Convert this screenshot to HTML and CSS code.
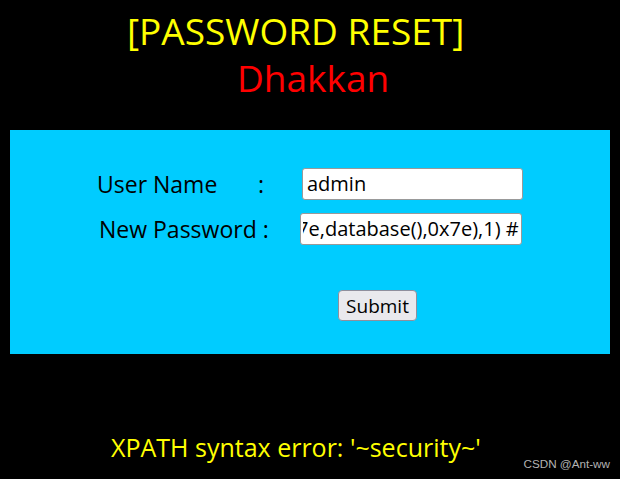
FILE: index.html
```html
<!DOCTYPE html>
<html lang="en">
<head>
  <meta charset="UTF-8" />
  <title>Less-17 Update Query- Error based - String</title>
  <link rel="stylesheet" href="styles.css">
</head>
<body>
  <div class="banner">
    <div class="title">[PASSWORD RESET]</div>
    <div class="author">Dhakkan</div>
  </div>

  <div class="panel">
    <form class="reset-form" onsubmit="return false">
      <div class="row">
        <label class="label"><span class="label-name">User Name</span>:</label>
        <input type="text" class="field field-user" name="uname" value="admin" />
      </div>
      <div class="row">
        <label class="label label-pass">New Password :</label>
        <input type="text" class="field field-pass" id="passwd" name="passwd" value="1' and updatexml(1,concat(0x7e,database(),0x7e),1) #" />
      </div>
      <div class="actions">
        <input type="submit" class="submit" name="submit" value="Submit" />
      </div>
    </form>
  </div>

  <div class="result">
    <span class="error">XPATH syntax error: '~security~'</span>
    <span class="watermark">CSDN @Ant-ww</span>
  </div>

  <script>
    // show the tail of the payload, like after typing it
    const passwd = document.getElementById('passwd');
    passwd.scrollLeft = passwd.scrollWidth;
  </script>
</body>
</html>
```

FILE: styles.css
```css
body {
  margin: 0;
  background: #000;
  font-family: 'Open Sans', 'Noto Sans', sans-serif;
  width: 620px;
  height: 479px;
  overflow: hidden;
}

.banner {
  display: flex;
  flex-direction: column;
  padding-top: 6px;
  height: 124px;
  box-sizing: border-box;
}
.title {
  color: #ffff00;
  font-size: 37px;
  line-height: 50px;
  padding-left: 127px;
}
.author {
  color: #ff0000;
  font-size: 37px;
  line-height: 44px;
  padding-left: 237px;
}

.panel {
  background: #00ccff;
  margin: 6px 10px 0 10px;
  height: 224px;
  box-sizing: border-box;
  padding-top: 31px;
}

.reset-form {
  display: flex;
  flex-direction: column;
}
.row {
  display: flex;
  align-items: center;
  height: 45px;
}
.label {
  color: #000;
  font-size: 23px;
  width: 203px;
  padding-left: 87px;
  display: flex;
}
.label-name {
  width: 161px;
}
.label-pass {
  padding-left: 89px;
  width: 201px;
}

.field {
  width: 221px;
  height: 32px;
  box-sizing: border-box;
  border: 1px solid #999;
  border-radius: 3px;
  background: #fff;
  font-family: 'Open Sans', 'Noto Sans', sans-serif;
  font-size: 20px;
  padding: 0 4px;
  color: #000;
}
.field-user {
  margin-left: 2px;
}
.field-pass {
  width: 222px;
  padding: 0 2px;
}

.actions {
  padding-left: 328px;
  padding-top: 39px;
}
.submit {
  width: 79px;
  height: 31px;
  background: #e9e9ed;
  border: 1px solid #8f8f9d;
  border-radius: 4px;
  font-family: 'Open Sans', 'Noto Sans', sans-serif;
  font-size: 19px;
  padding: 0;
  color: #000;
}

.result {
  position: relative;
  padding-top: 77px;
  padding-left: 111px;
}
.error {
  color: #ffff00;
  font-size: 25px;
  line-height: 32px;
}
.watermark {
  position: absolute;
  right: 10px;
  top: 103px;
  color: #b3b3b3;
  font-family: 'Liberation Sans', Arial, sans-serif;
  font-size: 11.7px;
}
```
